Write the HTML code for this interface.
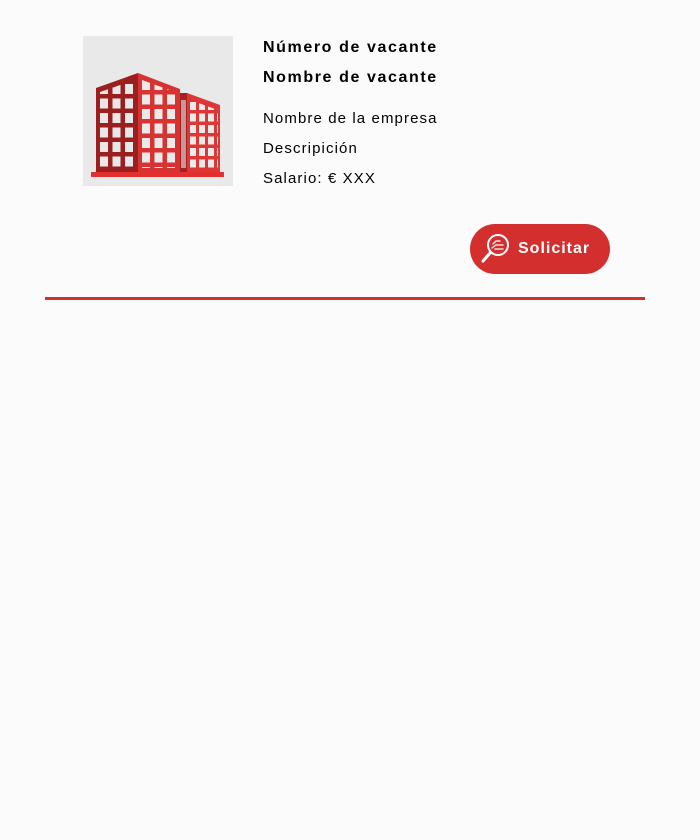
<!DOCTYPE html>
<html><head><meta charset="utf-8"><style>
body{margin:0;background:#fbfbfb;width:700px;height:840px;position:relative;font-family:"Liberation Sans",sans-serif;color:#000}
.t{position:absolute;left:263px;white-space:nowrap}
.b{font-weight:bold;font-size:16px;letter-spacing:1.6px}
.r{font-size:15px;letter-spacing:1.1px}
.btn{position:absolute;left:470px;top:224px;width:140px;height:50px;border-radius:25px;background:#d32f2f;color:#fff}
.line{position:absolute;left:45px;top:297px;width:600px;height:3px;background:#d32f2f}
</style></head><body>
<svg style="position:absolute;left:83px;top:36px" width="150" height="150" viewBox="0 0 150 150">
<rect width="150" height="150" fill="#e9e9e9"/>
<defs>
<pattern id="w1" x="17" y="48" width="12.5" height="14.5" patternUnits="userSpaceOnUse"><rect x="0" y="0" width="8" height="10" fill="#e8e8e8"/></pattern>
<pattern id="w2" x="59" y="44" width="12.5" height="14.5" patternUnits="userSpaceOnUse"><rect x="0" y="0" width="8" height="10" fill="#eaeaea"/></pattern>
<pattern id="w3" x="107" y="66" width="9" height="11.5" patternUnits="userSpaceOnUse"><rect x="0" y="0" width="6" height="8" fill="#eaeaea"/></pattern>
</defs>
<polygon points="13,52 55,37 55,136 13,136" fill="#9c1f1f"/>
<polygon points="55,37 97,53 97,136 55,136" fill="#d83333"/>
<polygon points="97,57 104,57 104,136 97,136" fill="#a62222"/>
<polygon points="104,57 137,69 137,136 104,136" fill="#de3535"/>
<polygon points="17,56 52,44 52,132 17,132" fill="url(#w1)"/>
<polygon points="59,44 95,57 95,132 59,132" fill="url(#w2)"/>
<rect x="98" y="64" width="5" height="68" fill="#e5e5e5" opacity=".6"/>
<polygon points="107,64 135,74 135,132 107,132" fill="url(#w3)"/>
<rect x="8" y="136" width="133" height="5" fill="#e03030"/>
</svg>
<div class="t b" style="top:39px">Número de vacante</div>
<div class="t b" style="top:69px">Nombre de vacante</div>
<div class="t r" style="top:110px">Nombre de la empresa</div>
<div class="t r" style="top:140px">Descripición</div>
<div class="t r" style="top:170px">Salario: € XXX</div>
<div class="btn">
<svg style="position:absolute;left:10px;top:8px" width="32" height="32" viewBox="0 0 32 32" fill="none" stroke="#fff" stroke-width="2" stroke-linecap="round">
<circle cx="18" cy="13" r="10"/>
<line x1="10.5" y1="20.5" x2="3" y2="29" stroke-width="3"/>
<path d="M12 16 L16 13 L23 13 M13 12 L16 9 L20 9 M15 17 L23 17" stroke-width="1.3"/>
</svg>
<div style="position:absolute;left:48px;top:16px;font-size:16px;font-weight:bold;letter-spacing:1px">Solicitar</div>
</div>
<div class="line"></div>
</body></html>
